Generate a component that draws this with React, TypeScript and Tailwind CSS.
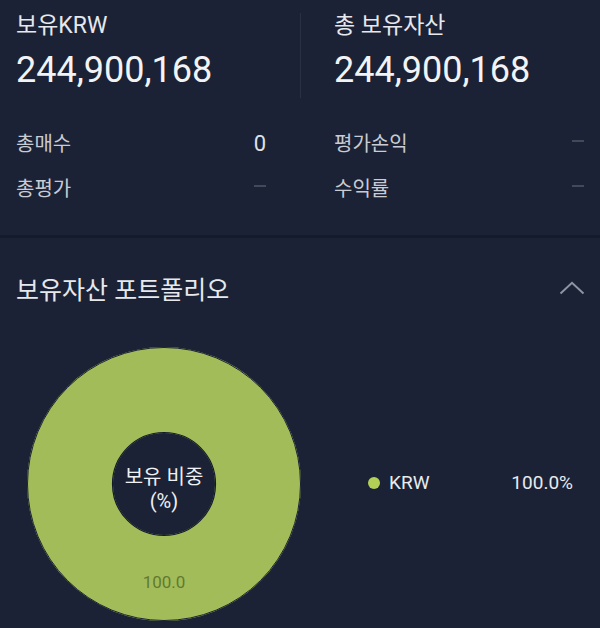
import React from "react";

const FONT = { fontFamily: "Roboto, 'Noto Sans CJK KR', 'Noto Sans', sans-serif" };

function Dash() {
  return <span className="block w-3 h-[2px] bg-[#424959] -translate-y-[3px]" />;
}

function Row({ label, value }: { label: string; value: React.ReactNode }) {
  return (
    <div className="flex items-center justify-between text-[20px] leading-[28px]">
      <span className="text-[#c9ccd3]">{label}</span>
      {value}
    </div>
  );
}

function Donut() {
  const size = 274;
  const c = size / 2;
  const rOuter = 137;
  const rInner = 51;
  const r = (rOuter + rInner) / 2;
  const w = rOuter - rInner;
  return (
    <div className="relative w-[274px] h-[274px] shrink-0">
      <svg width={size} height={size} viewBox={`0 0 ${size} ${size}`}>
        <circle cx={c} cy={c} r={r} fill="none" stroke="#a3bc5a" strokeWidth={w} />
        <circle cx={c} cy={c} r={rOuter - 0.5} fill="none" stroke="#1b2236" strokeWidth={1} />
        <circle cx={c} cy={c} r={rInner + 0.5} fill="none" stroke="#141a2a" strokeWidth={1.2} />
      </svg>
      <div className="absolute inset-0 flex flex-col items-center justify-center translate-y-[5px] text-[20px] leading-[24px] text-[#eef0f3]">
        <span>보유 비중</span>
        <span>(%)</span>
      </div>
      <div className="absolute left-0 right-0 top-[225px] text-center text-[17px] leading-[20px] text-[#627a2e]">
        100.0
      </div>
    </div>
  );
}

export default function App() {
  return (
    <div className="w-[600px] h-[628px] bg-[#1b2236] overflow-hidden" style={FONT}>
      {/* Top summary */}
      <div className="h-[238px] border-b-[3px] border-[#151b2a] px-4 pt-[11px]">
        <div className="flex">
          <div className="w-[250px] pb-[6px]">
            <div className="text-[23px] leading-[30px] text-[#e6e8ec]">보유KRW</div>
            <div className="mt-[7px] text-[36px] leading-[44px] text-[#f2f3f5]">244,900,168</div>
          </div>
          <div className="w-[68px] flex justify-center pt-[2px]">
            <div className="w-px h-full bg-[#2a3145]" />
          </div>
          <div className="flex-1 pb-[6px]">
            <div className="text-[23px] leading-[30px] text-[#e6e8ec]">총 보유자산</div>
            <div className="mt-[7px] text-[36px] leading-[44px] text-[#f2f3f5]">244,900,168</div>
          </div>
        </div>
        <div className="flex mt-[32px]">
          <div className="w-[250px] flex flex-col gap-[17px]">
            <Row label="총매수" value={<span className="text-[22px] text-[#dfe1e6]">0</span>} />
            <Row label="총평가" value={<Dash />} />
          </div>
          <div className="w-[68px]" />
          <div className="flex-1 flex flex-col gap-[17px]">
            <Row label="평가손익" value={<Dash />} />
            <Row label="수익률" value={<Dash />} />
          </div>
        </div>
      </div>

      {/* Portfolio */}
      <div className="pt-[36px]">
        <div className="flex items-center justify-between pl-4 pr-[15px]">
          <h2 className="text-[25px] leading-[34px] text-[#e6e8ec] font-normal">보유자산 포트폴리오</h2>
          <svg width="26" height="14" viewBox="0 0 26 14" className="-translate-y-[3px]">
            <polyline points="1.5,12.5 13,1.8 24.5,12.5" fill="none" stroke="#8e94a2" strokeWidth="2" strokeLinejoin="miter" />
          </svg>
        </div>
        <div className="flex items-center mt-[39px] pl-[27px]">
          <Donut />
          <div className="flex-1 flex items-center pl-[67px] pr-[27px] -translate-y-[1px]">
            <span className="w-3 h-3 rounded-full bg-[#b3cf55]" />
            <span className="ml-[9px] text-[19px] leading-[26px] text-[#e8eaee]">KRW</span>
            <span className="ml-auto text-[19px] leading-[26px] text-[#e8eaee]">100.0%</span>
          </div>
        </div>
      </div>
    </div>
  );
}
